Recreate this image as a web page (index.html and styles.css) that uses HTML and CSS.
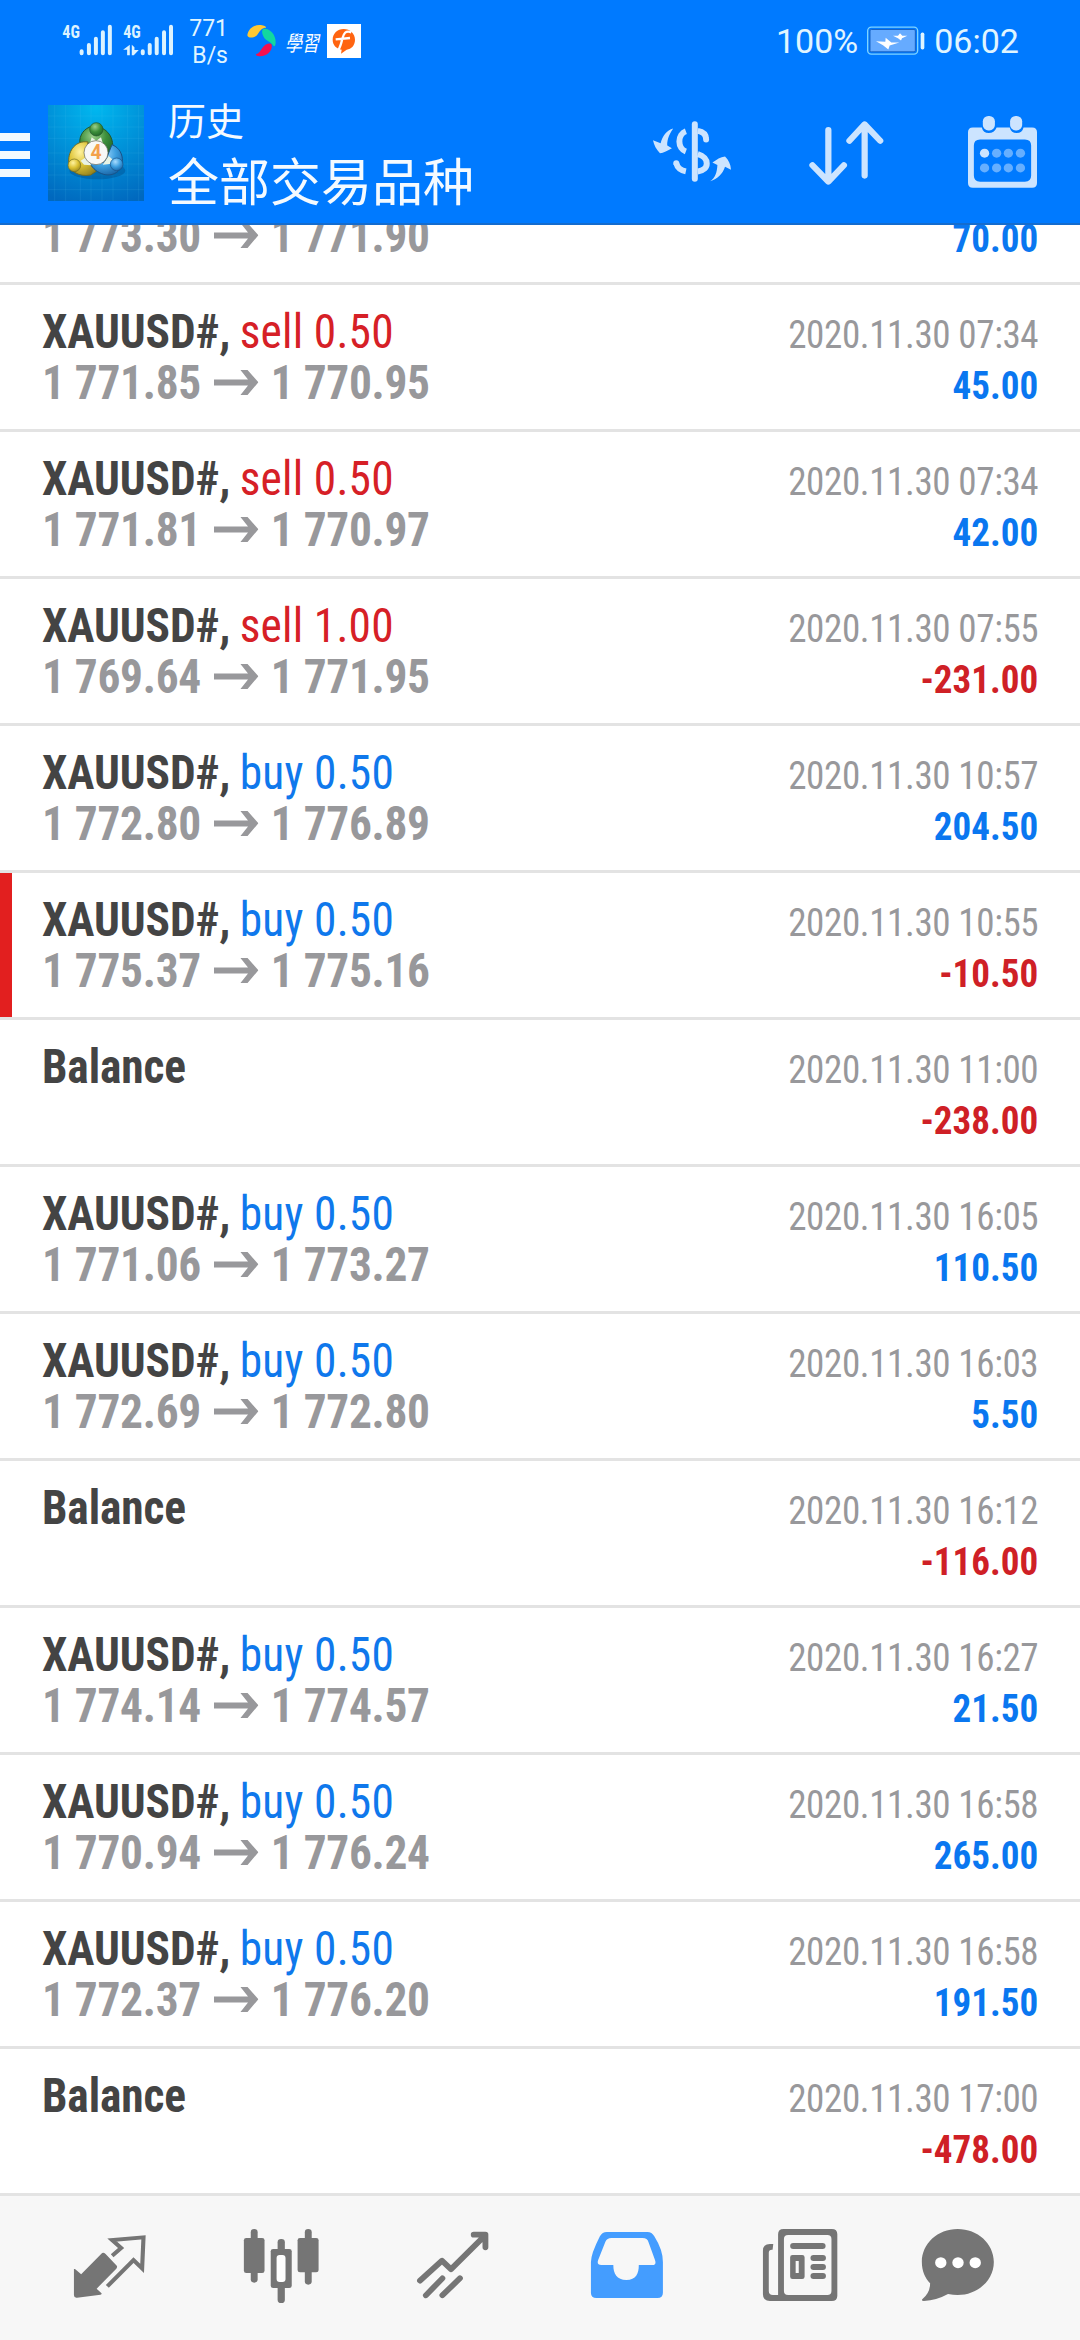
FILE: index.html
```
<!DOCTYPE html>
<html lang="zh">
<head>
<meta charset="utf-8">
<title>历史</title>
<link rel="stylesheet" href="styles.css">
</head>
<body>
<header class="header">
  <div class="status">
    <svg class="signal" viewBox="36 42 340 96" fill="#dcf3ff">
      <text class="net" x="37" y="84" textLength="53" lengthAdjust="spacingAndGlyphs">4G</text>
      <text class="net" x="220" y="84" textLength="53" lengthAdjust="spacingAndGlyphs">4G</text>
      <g stroke="#dcf3ff" stroke-width="12" stroke-linecap="round">
        <path d="M95 124v6M117 105v25M138 86v44M159 67v63M180 50v80"/>
        <path d="M279 124v6M300 105v25M321 86v44M343 67v63M364 50v80"/>
      </g>
      <path d="M240 104v32h-8v-17h-12zM246 104l8 8v8h13l-15 16h-6z"/>
    </svg>
    <div class="speed"><span>771</span><span>B/s</span></div>
    <svg class="swirl" viewBox="110 43 88 98">
      <path fill="#ffc933" d="M111 76C114 54 134 43 152 45c10 1 16 5 16 8-12 0-18 8-25 19-8 13-30 15-32 4z"/>
      <path fill="#12d8a0" d="M160 57c14-4 38 14 37 41 0 10-4 13-7 10-4-8-13-11-22-18-10-8-17-29-8-33z"/>
      <path fill="#f5104f" d="M185 106c3 18-15 35-37 34-7 0-11-2-11-6 9-2 12-9 20-20 8-12 26-17 28-8z"/>
    </svg>
    <span class="study">學習</span>
    <svg class="flag" viewBox="351 42 102 102">
      <path fill="#fff" d="M351 42h102v102H351z"/>
      <path fill="#ff6410" d="M401 57c19 0 34 14 34 32 0 17-11 28-25 30l-17 12 2-12c-16-3-27-14-27-30 0-18 14-32 33-32z"/>
      <path fill="none" stroke="#fff" stroke-width="7" d="M424 67c-18-7-23 4-27 19-4 18-7 27-13 35M377 88l43-4"/>
    </svg>
    <span class="percent">100%</span>
    <svg class="battery" viewBox="291 47 174 86">
      <rect x="293" y="50" width="150" height="81" rx="11" fill="none" stroke="#7fd4ff" stroke-width="4"/>
      <rect x="300" y="57" width="136" height="67" rx="4" fill="#66abff" stroke="#1762c4" stroke-width="3"/>
      <path fill="#fff" d="M318 92l28 2 1-12 17 14 24 0-29 9-4 12-16-13zM369 76l15 0 6-8 7 8 15 0-16 7-3 7-9-7z"/>
      <rect x="452" y="66" width="11" height="51" rx="5" fill="#dff4ff"/>
    </svg>
    <span class="clock">06:02</span>
  </div>
  <div class="appbar">
    <svg class="menu" viewBox="0 0 30 44" fill="#f3faff"><path d="M0 0h30v8H0zM0 18h30v8H0zM0 36h30v8H0z"/></svg>
    <svg class="logo" viewBox="24 27 288 288">
      <defs>
        <radialGradient id="sky" cx=".5" cy=".02" r="1.05"><stop offset="0" stop-color="#00b8f0"/><stop offset=".5" stop-color="#0090d8"/><stop offset="1" stop-color="#0068be"/></radialGradient>
        <radialGradient id="gr" cx=".4" cy=".3" r=".8"><stop offset="0" stop-color="#9cd08c"/><stop offset=".5" stop-color="#3d8f3b"/><stop offset="1" stop-color="#1c5f25"/></radialGradient>
        <radialGradient id="ye" cx=".4" cy=".3" r=".8"><stop offset="0" stop-color="#fff3a0"/><stop offset=".5" stop-color="#dcc233"/><stop offset="1" stop-color="#8e7d1d"/></radialGradient>
        <radialGradient id="bl" cx=".4" cy=".3" r=".8"><stop offset="0" stop-color="#a8dcff"/><stop offset=".5" stop-color="#3d9fe0"/><stop offset="1" stop-color="#145b9c"/></radialGradient>
      </defs>
      <path fill="url(#sky)" d="M24 27h288v288H24z"/>
      <path stroke="#5cc8f5" stroke-opacity=".18" stroke-width="2" d="M44 27v288M77 27v288M121 27v288M153 27v288M186 27v288M219 27v288M263 27v288M296 27v288M24 60h288M24 93h288M24 127h288M24 171h288M24 204h288M24 237h288M24 281h288"/>
      <ellipse cx="172" cy="224" rx="84" ry="26" fill="#00437f" opacity=".35"/>
      <path fill="url(#gr)" stroke="#24562b" stroke-width="3" d="M149 93c-24 10-34 35-28 55l49-10 38 44c24-36 3-83-34-89z"/>
      <path fill="url(#ye)" stroke="#716b22" stroke-width="3" d="M144 138c-36-6-59 25-58 58 1 28 28 48 66 41l18-12-32-34z"/>
      <path fill="url(#bl)" stroke="#1a5287" stroke-width="3" d="M216 146c35 14 40 57 18 80-25 22-65 9-85-24l46-4z"/>
      <path fill="#e8f3e4" d="M155 124l14 10 14-10 6 20h-40zM122 194l18-12 14 26-22-2zM206 180l16 14-13 10-21 2z"/>
      <circle cx="169" cy="100" r="20" fill="url(#gr)" stroke="#24562b" stroke-width="2"/>
      <circle cx="103" cy="208" r="19" fill="url(#ye)" stroke="#716b22" stroke-width="2"/>
      <circle cx="230" cy="205" r="19" fill="url(#bl)" stroke="#1a5287" stroke-width="2"/>
      <circle cx="168" cy="170" r="36" fill="#f8f8f6" stroke="#5e6052" stroke-width="2"/>
      <text class="four" x="168" y="190" text-anchor="middle">4</text>
    </svg>
    <div class="titles"><span class="sub">历史</span><span class="main">全部交易品种</span></div>
    <div class="actions">
      <svg class="dollar" viewBox="33 62 235 182" fill="#cce4ff">
        <path fill="none" stroke="#cce4ff" stroke-width="18" stroke-linecap="round" d="M159 71v164"/>
        <path fill="none" stroke="#cce4ff" stroke-width="18" d="M132 92a28 32 0 0 0 0 61M168 91q24 4 25 24M168 161c36 10 36 48 0 52M103 188q5 20 29 25"/>
        <circle cx="193" cy="117" r="9"/><circle cx="103" cy="188" r="9"/>
        <path d="M94 84C79 104 75 124 76 135l14 8c-13 8-25 14-36 15C43 147 36 134 33 119l23 9C62 106 74 89 94 84zM205 243c15-10 21-26 22-49l-15-8c13-9 24-16 38-18 11 11 17 23 18 40l-18-9c-7 21-22 37-45 44z"/>
      </svg>
      <svg class="sort" viewBox="780 362 217 191" preserveAspectRatio="none" fill="none" stroke="#cce4ff" stroke-width="18" stroke-linecap="round" stroke-linejoin="round"><path d="M836 389v152M790 494l46 49 45-49M941 525V374M897 421l44-49 45 49"/></svg>
      <svg class="calendar" viewBox="1243 347 200 215" preserveAspectRatio="none">
        <path fill="#cce4ff" fill-rule="evenodd" d="M1257 381h26q4 17 20 17t23-17h38q4 17 20 17t20-17h25q14 0 14 14v152q0 14-14 14h-172q-14 0-14-14V395q0-14 14-14zM1278 417q-18 0-18 18v90q0 18 18 18h130q18 0 18-18v-90q0-18-18-18z"/>
        <rect x="1286" y="347" width="35" height="43" rx="16" fill="#cce4ff"/><rect x="1365" y="347" width="35" height="43" rx="16" fill="#cce4ff"/>
        <circle cx="1291" cy="458" r="13.500" fill="#cce4ff"/>
        <g fill="#66afff"><circle cx="1326" cy="458" r="13.500"/><circle cx="1360" cy="458" r="13.500"/><circle cx="1395" cy="458" r="13.500"/><circle cx="1291" cy="502" r="13.500"/><circle cx="1326" cy="502" r="13.500"/><circle cx="1360" cy="502" r="13.500"/><circle cx="1395" cy="502" r="13.500"/></g>
      </svg>
    </div>
  </div>
</header>

<svg class="defs" width="0" height="0"><symbol id="arrow" viewBox="0 0 47 25" preserveAspectRatio="none"><path fill="currentColor" d="M0 9.500h36L28 0h7.500L47 12.200 35.500 25H28l8-9.500H0z"/></symbol></svg>

<main class="list">
  <div class="row first"><div class="left"><div class="price"><span>1 773.30</span><svg><use href="#arrow"/></svg><span>1 771.90</span></div></div><div class="right"><span class="plus">70.00</span></div></div>
  <div class="row"><div class="left"><div class="deal"><b>XAUUSD#,</b><span class="sell">sell 0.50</span></div><div class="price"><span>1 771.85</span><svg><use href="#arrow"/></svg><span>1 770.95</span></div></div><div class="right"><span class="date">2020.11.30 07:34</span><span class="plus">45.00</span></div></div>
  <div class="row"><div class="left"><div class="deal"><b>XAUUSD#,</b><span class="sell">sell 0.50</span></div><div class="price"><span>1 771.81</span><svg><use href="#arrow"/></svg><span>1 770.97</span></div></div><div class="right"><span class="date">2020.11.30 07:34</span><span class="plus">42.00</span></div></div>
  <div class="row"><div class="left"><div class="deal"><b>XAUUSD#,</b><span class="sell">sell 1.00</span></div><div class="price"><span>1 769.64</span><svg><use href="#arrow"/></svg><span>1 771.95</span></div></div><div class="right"><span class="date">2020.11.30 07:55</span><span class="minus">-231.00</span></div></div>
  <div class="row"><div class="left"><div class="deal"><b>XAUUSD#,</b><span class="buy">buy 0.50</span></div><div class="price"><span>1 772.80</span><svg><use href="#arrow"/></svg><span>1 776.89</span></div></div><div class="right"><span class="date">2020.11.30 10:57</span><span class="plus">204.50</span></div></div>
  <div class="row marked"><div class="left"><div class="deal"><b>XAUUSD#,</b><span class="buy">buy 0.50</span></div><div class="price"><span>1 775.37</span><svg><use href="#arrow"/></svg><span>1 775.16</span></div></div><div class="right"><span class="date">2020.11.30 10:55</span><span class="minus">-10.50</span></div></div>
  <div class="row"><div class="left"><div class="deal"><b>Balance</b></div></div><div class="right"><span class="date">2020.11.30 11:00</span><span class="minus">-238.00</span></div></div>
  <div class="row"><div class="left"><div class="deal"><b>XAUUSD#,</b><span class="buy">buy 0.50</span></div><div class="price"><span>1 771.06</span><svg><use href="#arrow"/></svg><span>1 773.27</span></div></div><div class="right"><span class="date">2020.11.30 16:05</span><span class="plus">110.50</span></div></div>
  <div class="row"><div class="left"><div class="deal"><b>XAUUSD#,</b><span class="buy">buy 0.50</span></div><div class="price"><span>1 772.69</span><svg><use href="#arrow"/></svg><span>1 772.80</span></div></div><div class="right"><span class="date">2020.11.30 16:03</span><span class="plus">5.50</span></div></div>
  <div class="row"><div class="left"><div class="deal"><b>Balance</b></div></div><div class="right"><span class="date">2020.11.30 16:12</span><span class="minus">-116.00</span></div></div>
  <div class="row"><div class="left"><div class="deal"><b>XAUUSD#,</b><span class="buy">buy 0.50</span></div><div class="price"><span>1 774.14</span><svg><use href="#arrow"/></svg><span>1 774.57</span></div></div><div class="right"><span class="date">2020.11.30 16:27</span><span class="plus">21.50</span></div></div>
  <div class="row"><div class="left"><div class="deal"><b>XAUUSD#,</b><span class="buy">buy 0.50</span></div><div class="price"><span>1 770.94</span><svg><use href="#arrow"/></svg><span>1 776.24</span></div></div><div class="right"><span class="date">2020.11.30 16:58</span><span class="plus">265.00</span></div></div>
  <div class="row"><div class="left"><div class="deal"><b>XAUUSD#,</b><span class="buy">buy 0.50</span></div><div class="price"><span>1 772.37</span><svg><use href="#arrow"/></svg><span>1 776.20</span></div></div><div class="right"><span class="date">2020.11.30 16:58</span><span class="plus">191.50</span></div></div>
  <div class="row"><div class="left"><div class="deal"><b>Balance</b></div></div><div class="right"><span class="date">2020.11.30 17:00</span><span class="minus">-478.00</span></div></div>
</main>

<nav class="tabs">
  <svg viewBox="70 48 500 432" preserveAspectRatio="none">
    <path fill="#757575" d="M300 218q3 0 7 4l33 36q1 4-2 8l-57 60 14 14q2 3-3 4l-68 9q-9 1-9-7V267q2-1 4 1l17 15 58-61q3-4 6-4z"/>
    <path fill="none" stroke="#757575" stroke-width="12" d="M326 227l26-23-26-24 91-8-4 93-25-25-76 79"/>
  </svg>
  <svg viewBox="570 48 500 432" preserveAspectRatio="none" fill="#757575">
    <rect x="729" y="147" width="20" height="161" rx="10"/><rect x="709" y="174" width="60" height="105" rx="7"/>
    <rect x="886" y="147" width="20" height="167" rx="10"/><rect x="865" y="174" width="61" height="103" rx="7"/>
    <rect x="807" y="177" width="21" height="192" rx="10"/><rect x="787" y="207" width="61" height="117" rx="7"/><rect x="804" y="225" width="26" height="81" rx="9" fill="#fff"/>
  </svg>
  <svg viewBox="1070 48 500 432" preserveAspectRatio="none" fill="none" stroke="#757575" stroke-width="17" stroke-linecap="round" stroke-linejoin="round"><path d="M1221 302l64-60 26 26 95-98M1377 164h34v38M1238 346l48-51M1286 346l51-51"/></svg>
  <svg viewBox="2 48 500 432" preserveAspectRatio="none"><path fill="#449dff" fill-rule="evenodd" d="M193 156h118q13 0 20 13 25 41 25 77v92q0 16-16 16H163q-16 0-16-16v-92q0-24 26-77 7-13 20-13zM206 174q-12 0-17 11l-21 55q-5 15 9 15h35c0 26 10 45 38 45s36-19 36-45h39q13 0 8-15l-19-54q-3-12-17-12z"/></svg>
  <svg viewBox="502 48 500 432" preserveAspectRatio="none">
    <path fill="#757575" fill-rule="evenodd" d="M707 147h140q16 0 16 16v184q0 16-16 16H667q-20 0-20-20V212q0-20 20-20h10l-2 17h-2q-9 0-9 9v115q0 12 12 12h15V163q0-16 16-16zM720 165q-12 0-12 12v156q0 12 12 12h114q12 0 12-12V177q0-12-12-12z"/>
    <path stroke="#757575" stroke-width="18" stroke-linecap="round" d="M735 198h85M794 234h27M794 261h27M794 288h27"/>
    <path fill="#757575" fill-rule="evenodd" d="M733 225h28q7 0 7 7v58q0 7-7 7h-28q-7 0-7-7v-58q0-7 7-7zM742 243v36h9v-36z"/>
  </svg>
  <svg viewBox="1002 48 500 432" preserveAspectRatio="none">
    <path fill="#757575" d="M1213 147c58 0 105 44 105 99s-47 99-105 99q-13 0-28-3-33 19-70 21-9-1-4-6 22-19 22-47c-15-16-24-38-24-64 0-55 46-99 104-99z"/>
    <g fill="#fff"><circle cx="1164" cy="248" r="16.500"/><circle cx="1214" cy="248" r="16.500"/><circle cx="1264" cy="248" r="16.500"/></g>
  </svg>
</nav>
</body>
</html>
```
FILE: styles.css
```
* { box-sizing: border-box; }
body {
  margin: 0;
  width: 1080px;
  height: 2340px;
  display: flex;
  flex-direction: column;
  overflow: hidden;
  background: #fff;
  font-family: "Roboto Condensed", Roboto, "Noto Sans CJK SC", sans-serif;
}
svg { display: block; flex: none; }
.defs { display: none; }

.header {
  flex: none;
  height: 225px;
  background: #007aff;
  border-bottom: 2px solid #146cce;
  color: #fff;
}
.status {
  height: 82px;
  padding-left: 62px;
  display: flex;
  align-items: flex-start;
  font-family: Roboto, sans-serif;
  color: #e0f5ff;
}
.signal { width: 113px; height: 32px; margin-top: 24px; overflow: visible; }
.net { font: 700 57px "Roboto Condensed", Roboto, sans-serif; }
.speed {
  width: 53px;
  margin-top: 15px;
  display: flex;
  flex-direction: column;
  align-items: flex-end;
  font-size: 23px;
  line-height: 27px;
}
.swirl { width: 29px; height: 33px; margin: 24px 0 0 19px; }
.study {
  margin: 30px 0 0 9px;
  width: 34px;
  font: italic 400 17px/23px "Noto Sans CJK JP", sans-serif;
  color: #fff;
  transform: scaleY(1.25);
}
.flag { width: 34px; height: 34px; margin: 24px 0 0 8px; }
.percent { margin: 21px 0 0 415px; font-size: 34px; line-height: 40px; }
.battery { width: 58px; height: 29px; margin: 26px 0 0 9px; }
.clock { margin: 21px 0 0 9px; font-size: 34px; line-height: 40px; }

.appbar { height: 141px; display: flex; align-items: flex-start; padding-right: 43px; }
.menu { width: 30px; height: 44px; margin-top: 51px; }
.logo { width: 96px; height: 96px; margin: 23px 0 0 18px; }
.four { font: 700 58px Roboto, sans-serif; fill: #f3a14c; }
.titles {
  display: flex;
  flex-direction: column;
  margin: 12px 0 0 24px;
  font-family: "Noto Sans CJK SC", sans-serif;
  color: #f4faff;
}
.sub { font-size: 38px; line-height: 50px; }
.main { font-size: 51px; line-height: 70px; }
.actions { margin-left: auto; display: flex; align-items: flex-start; }
.dollar { width: 78px; height: 61px; margin: 39px 78px 0 0; overflow: visible; }
.sort { width: 75px; height: 64px; margin: 39px 84px 0 0; overflow: visible; }
.calendar { width: 69px; height: 72px; margin-top: 34px; }

.list { flex: 1; min-height: 0; overflow: hidden; }
.row {
  height: 147px;
  border-bottom: 3px solid #e3e3e3;
  display: flex;
  justify-content: space-between;
  padding: 21px 42px 0 42px;
}
.first { height: 60px; padding-top: 0; }
.first > div { margin-top: -15px; }
.marked { box-shadow: inset 12px 0 #e21f1f; }
.left { font-size: 48px; line-height: 51px; transform: scaleX(.945); transform-origin: left; }
.deal { display: flex; gap: 10px; height: 51px; }
.deal b { color: #444; letter-spacing: -.1px; }
.sell, .buy { letter-spacing: .2px; }
.sell { color: #d62026; }
.buy { color: #0f78ec; }
.price { display: flex; gap: 13.5px; color: #98989b; font-weight: 700; }
.price span { letter-spacing: -.3px; }
.price svg { width: 47px; height: 25px; margin-top: 13px; }
.right {
  display: flex;
  flex-direction: column;
  align-items: flex-end;
  padding-top: 4px;
  font-size: 39px;
  line-height: 51px;
  transform: scaleX(.95);
  transform-origin: right;
}
.date { color: #98989b; letter-spacing: -.4px; }
.plus, .minus { font-weight: 700; }
.plus { color: #0a77f0; }
.minus { color: #cf2026; }

.tabs { flex: none; height: 144px; padding-left: 24px; display: flex; background: #f7f7f7; }
.tabs svg { width: 172.2px; height: 144px; }
```
